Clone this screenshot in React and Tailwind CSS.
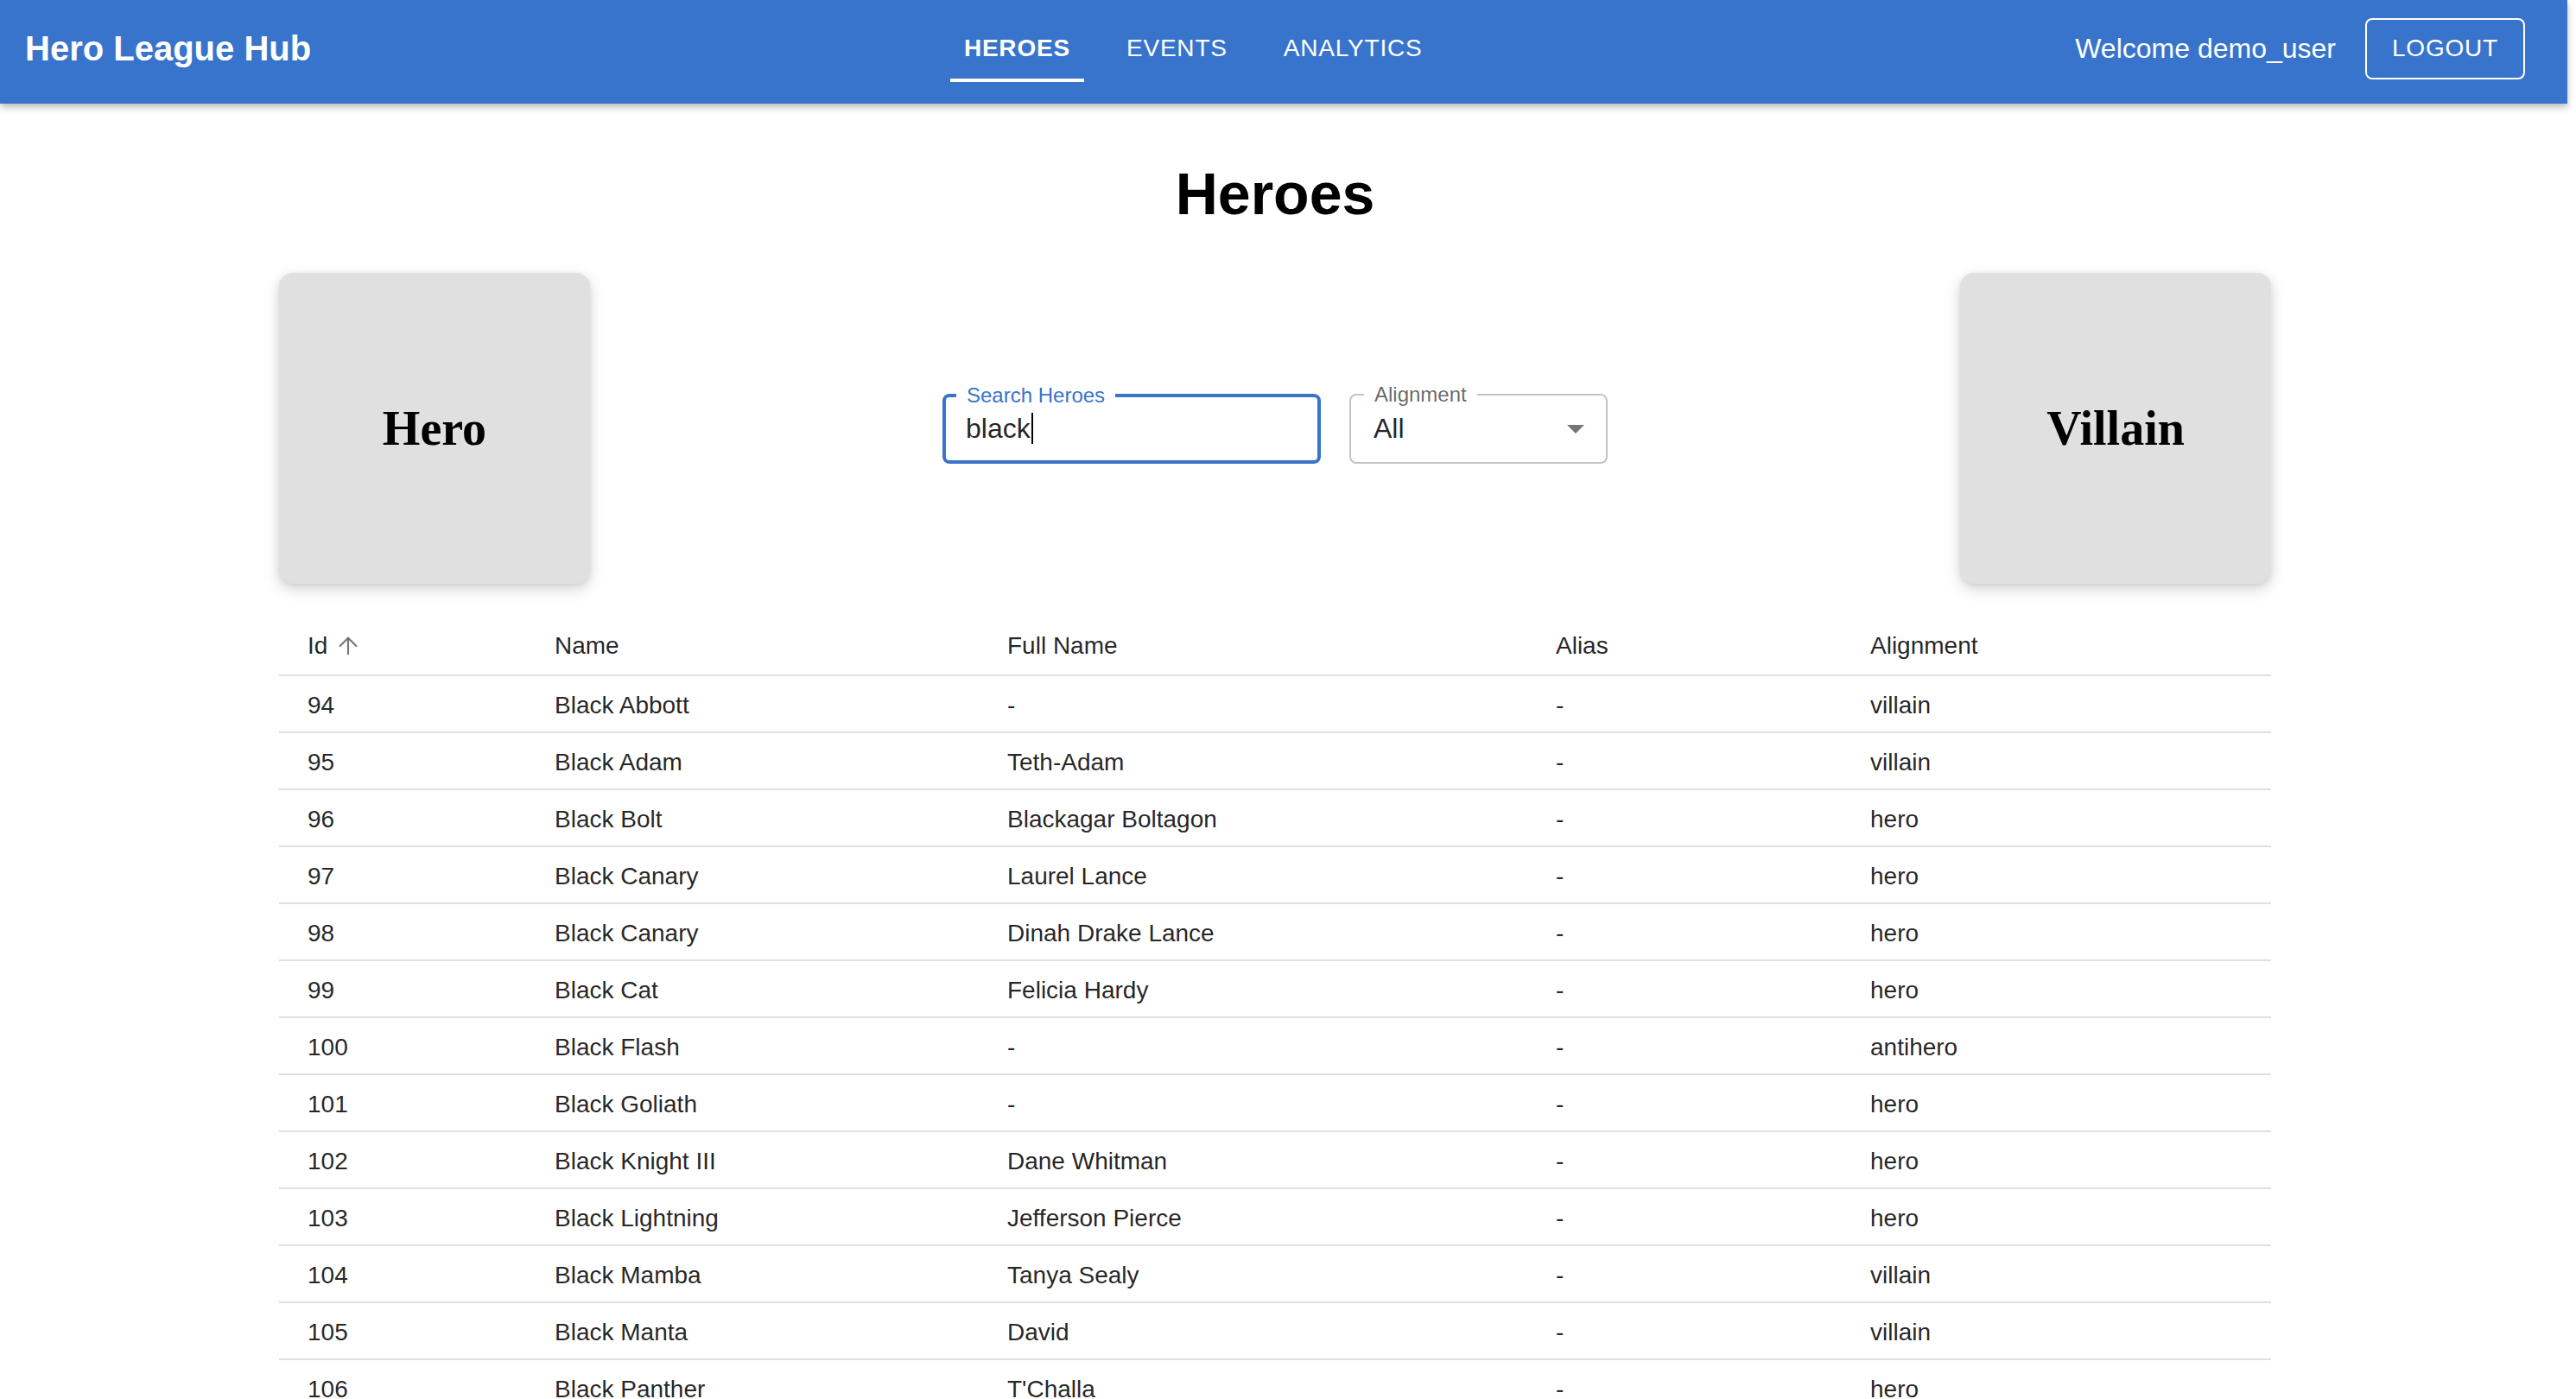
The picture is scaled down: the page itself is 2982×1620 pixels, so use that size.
import { ArrowUp } from 'lucide-react';

const heroes = [
  { id: 94, name: 'Black Abbott', fullName: '-', alias: '-', alignment: 'villain' },
  { id: 95, name: 'Black Adam', fullName: 'Teth-Adam', alias: '-', alignment: 'villain' },
  { id: 96, name: 'Black Bolt', fullName: 'Blackagar Boltagon', alias: '-', alignment: 'hero' },
  { id: 97, name: 'Black Canary', fullName: 'Laurel Lance', alias: '-', alignment: 'hero' },
  { id: 98, name: 'Black Canary', fullName: 'Dinah Drake Lance', alias: '-', alignment: 'hero' },
  { id: 99, name: 'Black Cat', fullName: 'Felicia Hardy', alias: '-', alignment: 'hero' },
  { id: 100, name: 'Black Flash', fullName: '-', alias: '-', alignment: 'antihero' },
  { id: 101, name: 'Black Goliath', fullName: '-', alias: '-', alignment: 'hero' },
  { id: 102, name: 'Black Knight III', fullName: 'Dane Whitman', alias: '-', alignment: 'hero' },
  { id: 103, name: 'Black Lightning', fullName: 'Jefferson Pierce', alias: '-', alignment: 'hero' },
  { id: 104, name: 'Black Mamba', fullName: 'Tanya Sealy', alias: '-', alignment: 'villain' },
  { id: 105, name: 'Black Manta', fullName: 'David', alias: '-', alignment: 'villain' },
  { id: 106, name: 'Black Panther', fullName: "T'Challa", alias: '-', alignment: 'hero' },
  { id: 107, name: 'Black Widow', fullName: 'Natasha Romanoff', alias: '-', alignment: 'hero' },
];

const cols = 'grid grid-cols-[287px_524px_635px_364px_496px] items-center';

function NavButton({ label, active }) {
  return (
    <button
      type="button"
      className={`flex h-[78px] items-center border-b-4 px-[16px] pt-[4px] text-[28px] uppercase tracking-[0.8px] text-white ${
        active ? 'border-white font-bold' : 'border-transparent font-normal'
      }`}
    >
      {label}
    </button>
  );
}

function SideCard({ label }) {
  return (
    <div className="grid h-[360px] w-[360px] place-items-center rounded-[16px] bg-[#e0e0e0] shadow-[0_6px_18px_rgba(0,0,0,0.16),0_2px_6px_rgba(0,0,0,0.08)]">
      <span className="font-['Liberation_Serif',serif] text-[56px] font-bold text-black">{label}</span>
    </div>
  );
}

export default function App() {
  return (
    <div className="h-[1620px] w-[2982px] overflow-hidden bg-white font-['Liberation_Sans',Arial,sans-serif] text-[rgba(0,0,0,0.87)]">
      <header className="relative z-10 flex h-[120px] w-[2972px] items-center bg-[#3874cb] pb-[8px] pl-[29px] pr-[49px] shadow-[0_4px_8px_rgba(0,0,0,0.28)]">
        <h1 className="text-[40px] font-bold leading-none text-white">Hero League Hub</h1>
        <nav className="flex flex-1 justify-center gap-[33px]">
          <NavButton label="Heroes" active />
          <NavButton label="Events" />
          <NavButton label="Analytics" />
        </nav>
        <div className="flex items-center gap-[34px]">
          <span className="text-[32px] text-white">Welcome demo_user</span>
          <button
            type="button"
            className="flex h-[71px] w-[185px] items-center justify-center rounded-[8px] border-2 border-white text-[28px] uppercase tracking-[0.8px] text-white"
          >
            Logout
          </button>
        </div>
      </header>

      <main className="w-[2952px] pt-[70px]">
        <h2 className="text-center text-[68px] font-bold leading-none text-black">Heroes</h2>

        <div className="mx-auto mt-[58px] w-[2306px]">
          <div className="flex items-center justify-between">
            <SideCard label="Hero" />

            <div className="flex items-center gap-[33px]">
              <div className="relative h-[81px] w-[438px] rounded-[8px] border-4 border-[#3874cb]">
                <span className="absolute -top-[16px] left-[12px] bg-white px-[12px] text-[24px] leading-[28px] text-[#3874cb]">
                  Search Heroes
                </span>
                <div className="flex h-full items-center pl-[23px] text-[32px]">
                  <span>black</span>
                  <span className="ml-[1px] inline-block h-[36px] w-[2px] bg-black" />
                </div>
              </div>

              <div className="relative h-[81px] w-[299px] rounded-[8px] border-2 border-[#c4c4c4]">
                <span className="absolute -top-[15px] left-[15px] bg-white px-[12px] text-[24px] leading-[28px] text-[rgba(0,0,0,0.6)]">
                  Alignment
                </span>
                <div className="flex h-full items-center justify-between pl-[26px] pr-[25px] text-[32px]">
                  <span>All</span>
                  <svg width="20" height="10" viewBox="0 0 20 10" className="mt-[2px]">
                    <polygon points="0,0 20,0 10,10" fill="#757575" />
                  </svg>
                </div>
              </div>
            </div>

            <SideCard label="Villain" />
          </div>

          <div className="mt-[41px] text-[28px]">
            <div className={`${cols} h-[66px] border-b-2 border-[#e0e0e0] pb-[3px]`}>
              <div className="flex items-center px-[33px]">
                Id
                <ArrowUp size={32} strokeWidth={1.6} className="ml-[8px] text-[#757575]" />
              </div>
              <div className="px-[32px]">Name</div>
              <div className="px-[32px]">Full Name</div>
              <div className="px-[32px]">Alias</div>
              <div className="px-[32px]">Alignment</div>
            </div>

            {heroes.map((h) => (
              <div key={h.id} className={`${cols} h-[66px] border-b-2 border-[#e0e0e0] pt-[3px]`}>
                <div className="px-[33px]">{h.id}</div>
                <div className="px-[32px]">{h.name}</div>
                <div className="px-[32px]">{h.fullName}</div>
                <div className="px-[32px]">{h.alias}</div>
                <div className="px-[32px]">{h.alignment}</div>
              </div>
            ))}
          </div>
        </div>
      </main>
    </div>
  );
}
